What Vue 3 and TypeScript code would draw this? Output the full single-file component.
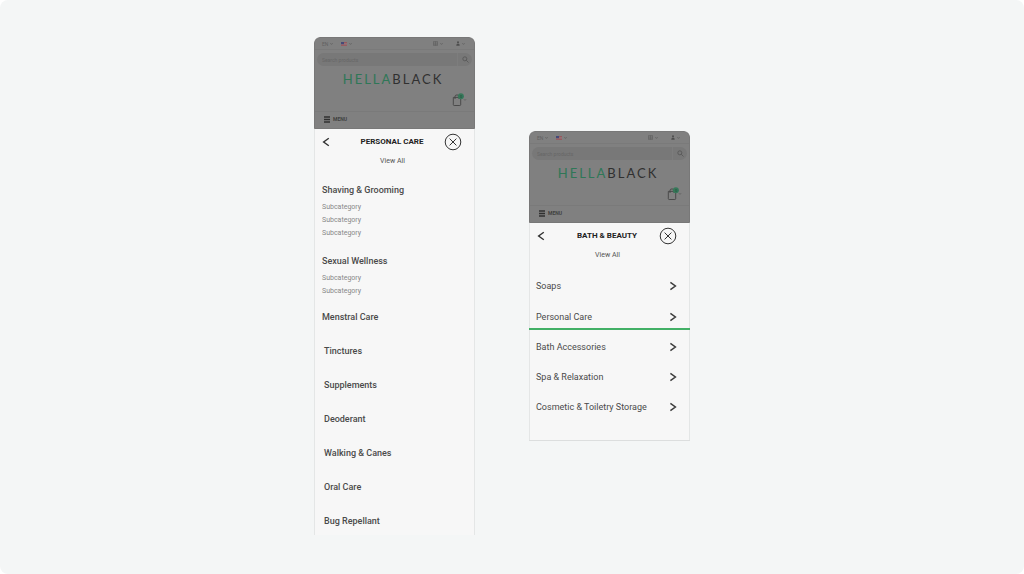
<script setup lang="ts">
interface Section {
  title: string
  subs: string[]
  inset?: boolean
}

interface Phone {
  id: string
  title: string
  sections?: Section[]
  links?: { label: string; active?: boolean }[]
}

const phones: Phone[] = [
  {
    id: 'care',
    title: 'PERSONAL CARE',
    sections: [
      { title: 'Shaving & Grooming', subs: ['Subcategory', 'Subcategory', 'Subcategory'] },
      { title: 'Sexual Wellness', subs: ['Subcategory', 'Subcategory'] },
      { title: 'Menstral Care', subs: [] },
      { title: 'Tinctures', subs: [], inset: true },
      { title: 'Supplements', subs: [], inset: true },
      { title: 'Deoderant', subs: [], inset: true },
      { title: 'Walking & Canes', subs: [], inset: true },
      { title: 'Oral Care', subs: [], inset: true },
      { title: 'Bug Repellant', subs: [], inset: true },
    ],
  },
  {
    id: 'bath',
    title: 'BATH & BEAUTY',
    links: [
      { label: 'Soaps' },
      { label: 'Personal Care', active: true },
      { label: 'Bath Accessories' },
      { label: 'Spa & Relaxation' },
      { label: 'Cosmetic & Toiletry Storage' },
    ],
  },
]
</script>

<template>
  <main class="board">
    <section v-for="phone in phones" :key="phone.id" class="phone" :class="phone.id">
      <header class="store">
        <div class="topbar">
          <button class="tiny" type="button">EN<svg class="caret" viewBox="0 0 4 3"><path d="M.5.5 2 2 3.5.5" /></svg></button>
          <button class="tiny" type="button" aria-label="Country">
            <svg class="flag" viewBox="0 0 6 4">
              <rect width="6" height="4" fill="#96585e" />
              <path d="M0 1.5h6M0 2.7h6" stroke="#99898a" stroke-width=".5" />
              <rect width="3" height="2.2" fill="#454a78" />
            </svg>
            <svg class="caret" viewBox="0 0 4 3"><path d="M.5.5 2 2 3.5.5" /></svg>
          </button>
          <span class="grow"></span>
          <button class="tiny currency" type="button" aria-label="Currency">
            <svg class="note" viewBox="0 0 5 5"><path d="M.5.5h4v4h-4zM.5 2h4M.5 3.3h4M2.5.5v4" /></svg>
            <svg class="caret" viewBox="0 0 4 3"><path d="M.5.5 2 2 3.5.5" /></svg>
          </button>
          <button class="tiny" type="button" aria-label="Account">
            <svg class="user" viewBox="0 0 4 5"><circle cx="2" cy="1.3" r="1" /><path d="M.3 4.8c0-3 3.4-3 3.4 0z" /></svg>
            <svg class="caret" viewBox="0 0 4 3"><path d="M.5.5 2 2 3.5.5" /></svg>
          </button>
        </div>
        <form class="search" @submit.prevent>
          <input type="text" placeholder="Search products" aria-label="Search products" />
          <button type="submit" aria-label="Search">
            <svg viewBox="0 0 7 7"><circle cx="2.8" cy="2.8" r="2" /><path d="m4.3 4.3 2.2 2.2" /></svg>
          </button>
        </form>
        <div class="logo"><span>HELLA</span>BLACK</div>
        <div class="cartrow">
          <button class="cart" type="button" aria-label="Cart">
            <svg class="bag" viewBox="0 0 16 14">
              <path d="M1.3 4.4h7.4v7.2q0 .9-.9.9H2.2q-.9 0-.9-.9zM3 6V3.6q0-1.7 2-1.7t2 1.7V6" fill="none" stroke="#444" stroke-width=".9" />
              <path d="m12 6.3 1 1 1-1" fill="none" stroke="#4c4c4c" stroke-width=".6" />
              <circle cx="8.9" cy="3.3" r="3" fill="#37785a" />
            </svg>
            <span class="count">0</span>
          </button>
        </div>
        <button class="menu" type="button">
          <svg viewBox="0 0 6 7"><path d="M0 1h6M0 3.5h6M0 6h6" /></svg>MENU
        </button>
      </header>

      <div class="titlebar">
        <button type="button" aria-label="Back">
          <svg class="back" viewBox="0 0 8 10"><path d="M6.8 1.2 1.6 5l5.2 3.8" /></svg>
        </button>
        <h2>{{ phone.title }}</h2>
        <button type="button" aria-label="Close">
          <svg class="close" viewBox="0 0 18 18"><circle cx="9" cy="9" r="7.8" /><path d="m5.6 5.6 6.8 6.8M12.4 5.6l-6.8 6.8" /></svg>
        </button>
      </div>
      <a class="viewall" href="#">View All</a>

      <div v-if="phone.sections" class="sections">
        <div
          v-for="s in phone.sections"
          :key="s.title"
          class="section"
          :class="{ plain: !s.subs.length, inset: s.inset }"
        >
          <h3>{{ s.title }}</h3>
          <ul v-if="s.subs.length">
            <li v-for="(sub, i) in s.subs" :key="i"><a href="#">{{ sub }}</a></li>
          </ul>
        </div>
      </div>

      <nav v-if="phone.links" class="links">
        <a v-for="l in phone.links" :key="l.label" href="#" :class="{ active: l.active }">
          <span>{{ l.label }}</span>
          <svg viewBox="0 0 8 10"><path d="M1.4 1.4 6.4 5 1.4 8.6" /></svg>
        </a>
      </nav>
    </section>
  </main>
</template>

<style>
html,
body {
  background: #fff;
}
</style>

<style scoped>
* {
  box-sizing: border-box;
}

.board {
  min-height: 100vh;
  padding: 0 20px 2px 0;
  border-radius: 8px;
  background: #f4f6f6;
  display: flex;
  justify-content: center;
  align-items: center;
  gap: 54px;
  font-family: Roboto, "Liberation Sans", sans-serif;
  color: #4a4a4a;
}

button {
  padding: 0;
  border: 0;
  background: none;
  font: inherit;
  color: inherit;
  display: flex;
  align-items: center;
}

a {
  color: inherit;
  text-decoration: none;
}

h2,
h3,
ul {
  margin: 0;
  padding: 0;
  list-style: none;
}

.phone {
  width: 161px;
  border-radius: 6px 6px 0 0;
  background: #f7f7f7;
  box-shadow: inset 1px 0 #e4e6e6, inset -1px 0 #e4e6e6;
  overflow: hidden;
}

.bath {
  padding-bottom: 18px;
  border-bottom: 1px solid #dcdede;
}

.store {
  height: 92px;
  background: #808080;
  border: 1px solid #787878;
  border-radius: 6px 6px 0 0;
  display: flex;
  flex-direction: column;
}

.topbar {
  height: 12px;
  padding: 0 9px 0 7px;
  border-bottom: 1px solid #7a7a7a;
  display: flex;
  align-items: center;
  gap: 8px;
}

.tiny {
  gap: 2px;
  font-size: 5px;
  line-height: 8px;
  color: #606060;
}

.grow {
  flex: 1;
}

.currency {
  margin-right: 5px;
}

.caret {
  width: 3px;
  height: 2px;
  fill: none;
  stroke: #505050;
}

.flag {
  width: 6px;
  height: 4px;
}

.note {
  width: 5px;
  height: 5px;
  fill: none;
  stroke: #606060;
  stroke-width: 0.6;
}

.user {
  width: 4px;
  height: 5px;
  fill: #4d4d4d;
}

.search {
  height: 13px;
  margin: 3px 2px 0;
  border-radius: 7px;
  background: #787878;
  display: flex;
  overflow: hidden;
}

.search input {
  flex: 1;
  min-width: 0;
  padding: 0 5px;
  border: 0;
  background: none;
  font: 5px Roboto, sans-serif;
}

.search input::placeholder {
  color: #666;
}

.search button {
  width: 15px;
  border-left: 1px solid #7d7d7d;
  justify-content: center;
}

.search svg {
  width: 7px;
  height: 7px;
  fill: none;
  stroke: #555;
  stroke-width: 0.8;
}

.logo {
  margin-top: 5px;
  padding-right: 3px;
  text-align: center;
  font: 13px/16px Lato, sans-serif;
  letter-spacing: 2px;
  color: #303030;
}

.logo span {
  color: #2f7757;
}

.cartrow {
  height: 25px;
  padding: 6px 6px 0 0;
  border-bottom: 1px solid #7a7a7a;
  display: flex;
  justify-content: flex-end;
  align-items: flex-start;
}

.cart {
  position: relative;
}

.bag {
  width: 16px;
  height: 14px;
}

.count {
  position: absolute;
  left: 6px;
  top: 0;
  width: 6px;
  text-align: center;
  font-size: 4px;
  line-height: 7px;
  color: #1c4a34;
}

.menu {
  height: 14px;
  padding-left: 9px;
  gap: 3px;
  font-size: 5px;
  font-weight: 700;
  color: #404040;
}

.menu svg {
  width: 6px;
  height: 7px;
  stroke: #303030;
  stroke-width: 1.4;
}

.titlebar {
  height: 25px;
  padding: 0 13px 0 8px;
  display: grid;
  grid-template-columns: 18px 1fr 18px;
  align-items: center;
}

.titlebar h2 {
  text-align: center;
  font-size: 8px;
  line-height: 12px;
  font-weight: 700;
  color: #222;
}

.back {
  width: 8px;
  height: 10px;
  fill: none;
  stroke: #333;
  stroke-width: 1.4;
}

.close {
  width: 18px;
  height: 18px;
  fill: none;
  stroke: #333;
  stroke-width: 1;
}

.viewall {
  display: block;
  padding-right: 4px;
  text-align: center;
  font-size: 7px;
  line-height: 14px;
  color: #555;
}

.sections {
  padding: 14px 8px 6px;
}

.section + .section {
  margin-top: 13px;
}

.section + .plain {
  margin-top: 11px;
}

.section + .inset {
  margin-top: 18px;
  padding-left: 2px;
}

h3 {
  font-size: 9px;
  line-height: 16px;
  font-weight: 500;
}

ul {
  margin-top: 3px;
  font-size: 7px;
  line-height: 13px;
  color: #888;
}

.links {
  padding-top: 9px;
}

.links a {
  height: 30px;
  padding: 0 13px 0 7px;
  display: flex;
  justify-content: space-between;
  align-items: center;
  font-size: 9px;
  line-height: 16px;
}

.links .active {
  position: relative;
  height: 31px;
}

.active::after {
  content: "";
  position: absolute;
  left: 0;
  right: 0;
  bottom: 2px;
  height: 2px;
  background: #43b066;
}

.links svg {
  width: 8px;
  height: 10px;
  fill: none;
  stroke: #3c3c3c;
  stroke-width: 1.5;
}
</style>
